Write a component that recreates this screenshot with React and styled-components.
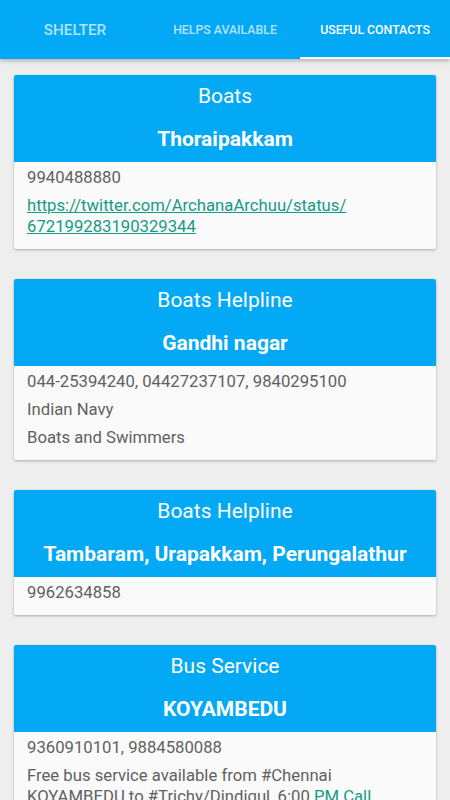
import React from 'react';
import styled, { createGlobalStyle } from 'styled-components';

const contacts = [
  {
    title: 'Boats',
    place: 'Thoraipakkam',
    lines: [
      '9940488880',
      { link: 'https://twitter.com/ArchanaArchuu/status/672199283190329344', text: ['https://twitter.com/ArchanaArchuu/status/', '672199283190329344'] },
    ],
  },
  {
    title: 'Boats Helpline',
    place: 'Gandhi nagar',
    lines: ['044-25394240, 04427237107, 9840295100', 'Indian Navy', 'Boats and Swimmers'],
  },
  {
    title: 'Boats Helpline',
    place: 'Tambaram, Urapakkam, Perungalathur',
    lines: ['9962634858'],
  },
  {
    title: 'Bus Service',
    place: 'KOYAMBEDU',
    lines: [
      '9360910101, 9884580088',
      { mixed: true },
    ],
  },
];

const tabs = ['SHELTER', 'HELPS AVAILABLE', 'USEFUL CONTACTS'];

const App = () => {
  return (
    <>
      <GlobalStyle />
      <Screen>
        <TabBar>
          {tabs.map((t, i) => (
            <Tab key={t} active={i === 2} small={i > 0}>{t}</Tab>
          ))}
        </TabBar>
        <List>
          {contacts.map((c, i) => (
            <Card key={i}>
              <CardHeader>
                <Title>{c.title}</Title>
                <Place>{c.place}</Place>
              </CardHeader>
              <CardBody>
                {c.lines.map((l, j) => {
                  if (typeof l === 'string') return <Line key={j}>{l}</Line>;
                  if (l.mixed) {
                    return (
                      <Line key={j}>
                        Free bus service available from #Chennai<br />
                        KOYAMBEDU to #Trichy/Dindigul, 6:00 <Accent>PM Call</Accent>
                      </Line>
                    );
                  }
                  return (
                    <Line key={j}>
                      <Link href="#">{l.text[0]}<br />{l.text[1]}</Link>
                    </Line>
                  );
                })}
              </CardBody>
            </Card>
          ))}
        </List>
      </Screen>
    </>
  );
};

const GlobalStyle = createGlobalStyle`
  html, body {
    margin: 0;
    padding: 0;
    background: #eeeeee;
    font-family: Roboto, "Noto Sans", sans-serif;
  }
`;

const Screen = styled.div`
  width: 450px;
  height: 800px;
  overflow: hidden;
  background: #eeeeee;
  display: flex;
  flex-direction: column;
`;

const TabBar = styled.div`
  flex: none;
  display: grid;
  grid-template-columns: repeat(3, 1fr);
  height: 59px;
  background: #03a9f4;
  box-shadow: 0 2px 4px rgba(0, 0, 0, 0.25);
  position: relative;
  z-index: 1;
`;

const Tab = styled.div`
  display: flex;
  align-items: center;
  justify-content: center;
  padding-top: 3px;
  font-weight: 500;
  font-size: ${(p) => (p.small ? '12.3px' : '15.2px')};
  color: ${(p) => (p.active ? '#ffffff' : 'rgba(255, 255, 255, 0.7)')};
  border-bottom: 2px solid ${(p) => (p.active ? '#ffffff' : 'transparent')};
  box-sizing: border-box;
`;

const List = styled.div`
  display: flex;
  flex-direction: column;
  gap: 30px;
  padding: 16px 14px;
`;

const Card = styled.div`
  background: #fafafa;
  border-radius: 2px;
  box-shadow: 0 1px 3px rgba(0, 0, 0, 0.28);
  overflow: hidden;
`;

const CardHeader = styled.div`
  background: #03a9f4;
  color: #ffffff;
  text-align: center;
  height: 87px;
  box-sizing: border-box;
  padding-top: 7px;
  display: flex;
  flex-direction: column;
  gap: 15px;
`;

const Title = styled.div`
  font-size: 21px;
  line-height: 28px;
`;

const Place = styled.div`
  font-size: 21px;
  line-height: 28px;
  font-weight: 700;
`;

const CardBody = styled.div`
  display: flex;
  flex-direction: column;
  gap: 7px;
  padding: 5px 13px 12px;
`;

const Line = styled.div`
  font-size: 16.7px;
  line-height: 21px;
  color: #616161;
`;

const Link = styled.a`
  color: #159a85;
  text-decoration: underline;
`;

const Accent = styled.span`
  color: #159a85;
`;

export default App;
